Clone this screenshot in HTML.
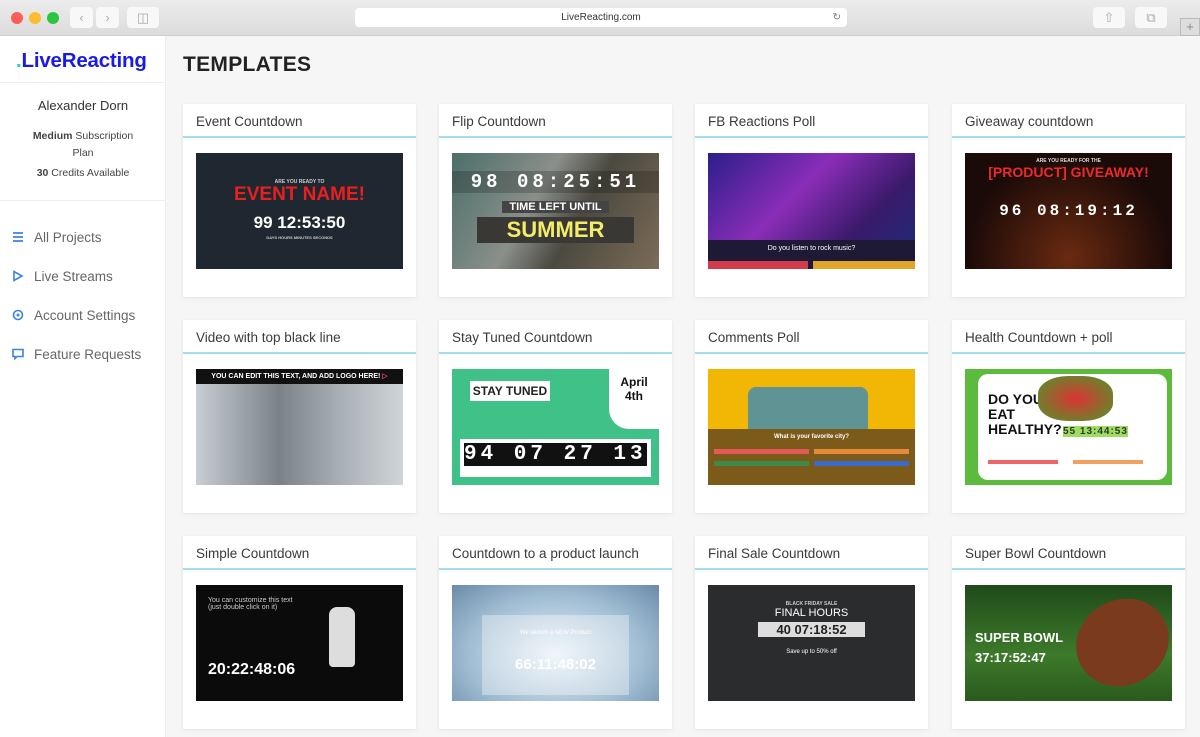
<!DOCTYPE html>
<html><head><meta charset="utf-8"><style>
*{margin:0;padding:0;box-sizing:border-box}
body{width:1200px;height:737px;overflow:hidden;background:#f6f6f7;font-family:"Liberation Sans",sans-serif;position:relative}
.chrome{position:absolute;left:0;top:0;width:1200px;height:36px;background:linear-gradient(#ececec,#dcdcdc);border-bottom:1px solid #cfcfcf}
.dot{position:absolute;top:12px;width:12px;height:12px;border-radius:50%}
.btn{position:absolute;top:7px;height:21px;background:#f8f8f8;border-radius:4px;color:#aaa;font-size:13px;text-align:center;line-height:21px}
.url{position:absolute;left:355px;top:8px;width:492px;height:19px;background:#fff;border-radius:4px;font-size:10px;color:#333;text-align:center;line-height:19px}
.side{position:absolute;left:0;top:36px;width:166px;height:701px;background:#fff;border-right:1px solid #eee}
.logo{position:absolute;left:16px;top:13px;font-size:20.5px;font-weight:bold;color:#1a1ae6;letter-spacing:-0.2px}
.logo span{color:#23d1c9}
.sep{position:absolute;left:0;width:166px;height:1px;background:#eee}
.nav{position:absolute;left:34px;font-size:13.5px;color:#666}
.ico{position:absolute;left:-22px;top:1px;width:12px;height:12px}
h1{position:absolute;left:183px;top:53px;font-size:21px;color:#222;font-weight:bold;letter-spacing:0.3px}
.card{position:absolute;width:233px;height:193px;background:#fff;box-shadow:0 1px 4px rgba(0,0,0,.08)}
.card .t{position:absolute;left:13px;top:10px;font-size:13.5px;color:#3a3a3a}
.card .l{position:absolute;left:0;top:32px;width:233px;height:2px;background:#a6dcf0}
.th{position:absolute;left:13px;top:49px;width:207px;height:116px;overflow:hidden;color:#fff;text-align:center;font-weight:bold}
</style></head><body>
<div class="chrome">
<div class="dot" style="left:11px;background:#fc5f57"></div>
<div class="dot" style="left:29px;background:#fdbc2e"></div>
<div class="dot" style="left:47px;background:#29c740"></div>
<div class="btn" style="left:70px;width:23px">&#8249;</div>
<div class="btn" style="left:96px;width:23px">&#8250;</div>
<div class="btn" style="left:127px;width:32px">&#9707;</div>
<div class="url">LiveReacting.com<span style="position:absolute;right:6px;color:#777">&#8635;</span></div>
<div class="btn" style="left:1093px;width:32px">&#8679;</div>
<div class="btn" style="left:1135px;width:32px">&#10697;</div>
<div style="position:absolute;left:1180px;top:18px;width:20px;height:18px;background:#ddd;border:1px solid #bbb;color:#888;font-size:13px;text-align:center">+</div>
</div>
<div class="side">
<div class="logo"><span>.</span>LiveReacting</div>
<div class="sep" style="top:46px"></div>
<div style="position:absolute;left:0;width:166px;top:62px;text-align:center;font-size:13px;color:#333">Alexander Dorn</div>
<div style="position:absolute;left:28px;width:110px;top:92px;text-align:center;font-size:10.5px;color:#444;line-height:17px"><b>Medium</b> Subscription Plan</div>
<div style="position:absolute;left:0;width:166px;top:131px;text-align:center;font-size:10.5px;color:#444"><b>30</b> Credits Available</div>
<div class="sep" style="top:164px"></div>
<div class="nav" style="top:194px"><svg class="ico" viewBox="0 0 12 12"><path d="M1 2h10M1 6h10M1 10h10" stroke="#3b82e6" stroke-width="1.8"/></svg>All Projects</div>
<div class="nav" style="top:233px"><svg class="ico" viewBox="0 0 12 12"><path d="M2 1.5v9l8-4.5z" fill="none" stroke="#3b82e6" stroke-width="1.6"/></svg>Live Streams</div>
<div class="nav" style="top:272px"><svg class="ico" viewBox="0 0 12 12"><circle cx="6" cy="6" r="4.5" fill="none" stroke="#3b82e6" stroke-width="1.6"/><circle cx="6" cy="6" r="1.5" fill="#3b82e6"/></svg>Account Settings</div>
<div class="nav" style="top:311px"><svg class="ico" viewBox="0 0 12 12"><path d="M1 1.5h10v7H5l-2 2v-2H1z" fill="none" stroke="#3b82e6" stroke-width="1.6"/></svg>Feature Requests</div>
</div>
<h1>TEMPLATES</h1>

<div class="card" style="left:183px;top:104px"><div class="t">Event Countdown</div><div class="l"></div>
<div class="th" style="background:#1f2831"><div style="font-size:5px;margin-top:26px;color:#ccc">ARE YOU READY TO</div><div style="color:#e82020;font-size:19px;font-family:'Liberation Sans Narrow',sans-serif;line-height:20px">EVENT NAME!</div><div style="font-size:17px;margin-top:8px">99 12:53:50</div><div style="font-size:4px;color:#ccc;margin-top:2px">DAYS HOURS MINUTES SECONDS</div></div></div>

<div class="card" style="left:439px;top:104px"><div class="t">Flip Countdown</div><div class="l"></div>
<div class="th" style="background:linear-gradient(120deg,#4c6f6a,#8a8f8a 40%,#4b4940 60%,#7d6c58)"><div style="margin-top:18px;font-size:19px;letter-spacing:4px;font-family:'Liberation Mono',monospace;background:rgba(0,0,0,.2)">98 08:25:51</div><div style="margin:8px 50px 0;background:#444;font-size:11px">TIME LEFT UNTIL</div><div style="margin:4px 25px 0;background:#3a3834;color:#f2ec6a;font-size:22px">SUMMER</div></div></div>

<div class="card" style="left:695px;top:104px"><div class="t">FB Reactions Poll</div><div class="l"></div>
<div class="th" style="background:linear-gradient(135deg,#2b1f8a,#8a2db8 40%,#3a1a6a 70%,#1a2d7a)"><div style="position:absolute;left:0;right:0;top:87px;height:29px;background:#1e1a35;font-size:7px;font-weight:normal;padding-top:5px">Do you listen to rock music?</div><div style="position:absolute;left:0;width:100px;top:108px;height:8px;background:#d23b4a"></div><div style="position:absolute;left:105px;width:102px;top:108px;height:8px;background:#e2a52b"></div></div></div>

<div class="card" style="left:952px;top:104px"><div class="t">Giveaway countdown</div><div class="l"></div>
<div class="th" style="background:radial-gradient(circle at 50% 90%,#6a2a10,#1a0a08 70%)"><div style="font-size:5px;margin-top:5px;color:#ddd">ARE YOU READY FOR THE</div><div style="color:#ec2b2b;font-size:14px">[PRODUCT] GIVEAWAY!</div><div style="margin-top:22px;font-size:16px;letter-spacing:3px;font-family:'Liberation Mono',monospace">96 08:19:12</div></div></div>

<div class="card" style="left:183px;top:320px"><div class="t">Video with top black line</div><div class="l"></div>
<div class="th" style="background:linear-gradient(90deg,#c8ced3,#7a8288 40%,#a9b0b5 70%,#cfd4d8)"><div style="background:#111;height:15px;font-size:7px;line-height:15px">YOU CAN EDIT THIS TEXT, AND ADD LOGO HERE! <span style="color:#e83b8a">&#9655;</span></div></div></div>

<div class="card" style="left:439px;top:320px"><div class="t">Stay Tuned Countdown</div><div class="l"></div>
<div class="th" style="background:#3fc187"><div style="position:absolute;left:18px;top:12px;width:80px;height:20px;background:#fff;color:#222;font-size:12px;line-height:20px">STAY TUNED</div><div style="position:absolute;right:0;top:0;width:50px;height:60px;background:#fff;color:#111;font-size:12px;padding-top:6px;border-bottom-left-radius:20px">April<br>4th</div><div style="position:absolute;left:8px;right:8px;top:70px;height:38px;background:#fff"></div><div style="position:absolute;left:12px;top:74px;font-size:21px;color:#fff;letter-spacing:4px;font-family:'Liberation Mono',monospace;background:#111">94 07 27 13</div></div></div>

<div class="card" style="left:695px;top:320px"><div class="t">Comments Poll</div><div class="l"></div>
<div class="th" style="background:#f2b705"><div style="position:absolute;left:40px;top:18px;width:120px;height:50px;background:#3a8ab8;border-radius:8px;opacity:.8"></div><div style="position:absolute;left:0;right:0;top:60px;height:56px;background:#7c5a1a;font-size:6px;padding-top:5px">What is your favorite city?</div><div style="position:absolute;left:6px;width:95px;top:80px;height:5px;background:#e35a5a"></div><div style="position:absolute;left:106px;width:95px;top:80px;height:5px;background:#e58a3a"></div><div style="position:absolute;left:6px;width:95px;top:92px;height:5px;background:#3d8a4a"></div><div style="position:absolute;left:106px;width:95px;top:92px;height:5px;background:#3a6ac8"></div></div></div>

<div class="card" style="left:952px;top:320px"><div class="t">Health Countdown + poll</div><div class="l"></div>
<div class="th" style="background:#5cba3c"><div style="position:absolute;left:13px;top:5px;right:5px;bottom:5px;background:#fff;border-radius:10px;color:#111;text-align:left"><div style="position:absolute;left:10px;top:18px;font-size:14px;line-height:15px;font-family:'Liberation Sans Narrow',sans-serif">DO YOU<br>EAT<br>HEALTHY?</div><div style="position:absolute;left:60px;top:2px;width:75px;height:45px;background:radial-gradient(#d33,#4a9a2a);border-radius:40%"></div><div style="position:absolute;left:85px;top:52px;font-size:10px;background:#9ede5e;color:#333;letter-spacing:1px">55 13:44:53</div><div style="position:absolute;left:10px;top:86px;width:70px;height:4px;background:#e66"></div><div style="position:absolute;left:95px;top:86px;width:70px;height:4px;background:#f0a060"></div></div></div></div>

<div class="card" style="left:183px;top:536px"><div class="t">Simple Countdown</div><div class="l"></div>
<div class="th" style="background:#0b0b0b;text-align:left;font-weight:normal"><div style="position:absolute;left:12px;top:12px;font-size:7px;color:#ccc">You can customize this text<br>(just double click on it)</div><div style="position:absolute;left:133px;top:22px;width:26px;height:60px;background:#ddd;border-radius:8px 8px 4px 4px"></div><div style="position:absolute;left:12px;top:76px;font-size:16px;font-weight:bold">20:22:48:06</div></div></div>

<div class="card" style="left:439px;top:536px"><div class="t">Countdown to a product launch</div><div class="l"></div>
<div class="th" style="background:radial-gradient(ellipse at 50% 60%,#e8f1f8,#9fbcd2 60%,#6a8aa8)"><div style="position:absolute;left:30px;right:30px;top:30px;height:80px;background:rgba(255,255,255,.35)"></div><div style="position:relative;font-size:6px;margin-top:45px;font-weight:normal">We launch a NEW Product</div><div style="position:relative;font-size:15px;margin-top:20px;color:#fff">66:11:48:02</div></div></div>

<div class="card" style="left:695px;top:536px"><div class="t">Final Sale Countdown</div><div class="l"></div>
<div class="th" style="background:#2a2c2e"><div style="font-size:5px;margin-top:16px;color:#ccc">BLACK FRIDAY SALE</div><div style="font-size:11px;font-weight:normal">FINAL HOURS</div><div style="margin:3px 50px 0;background:#ddd;color:#222;font-size:13px">40 07:18:52</div><div style="font-size:6px;margin-top:12px;font-weight:normal">Save up to 50% off</div></div></div>

<div class="card" style="left:952px;top:536px"><div class="t">Super Bowl Countdown</div><div class="l"></div>
<div class="th" style="background:linear-gradient(#1f4a1a,#3d7a2a 60%,#2a5a1e)"><div style="position:absolute;left:110px;top:15px;width:95px;height:85px;background:#7a3a1e;border-radius:50%;transform:rotate(-30deg)"></div><div style="position:absolute;left:10px;top:45px;font-size:13px;text-align:left">SUPER BOWL</div><div style="position:absolute;left:10px;top:65px;font-size:13px">37:17:52:47</div></div></div>
</body></html>
